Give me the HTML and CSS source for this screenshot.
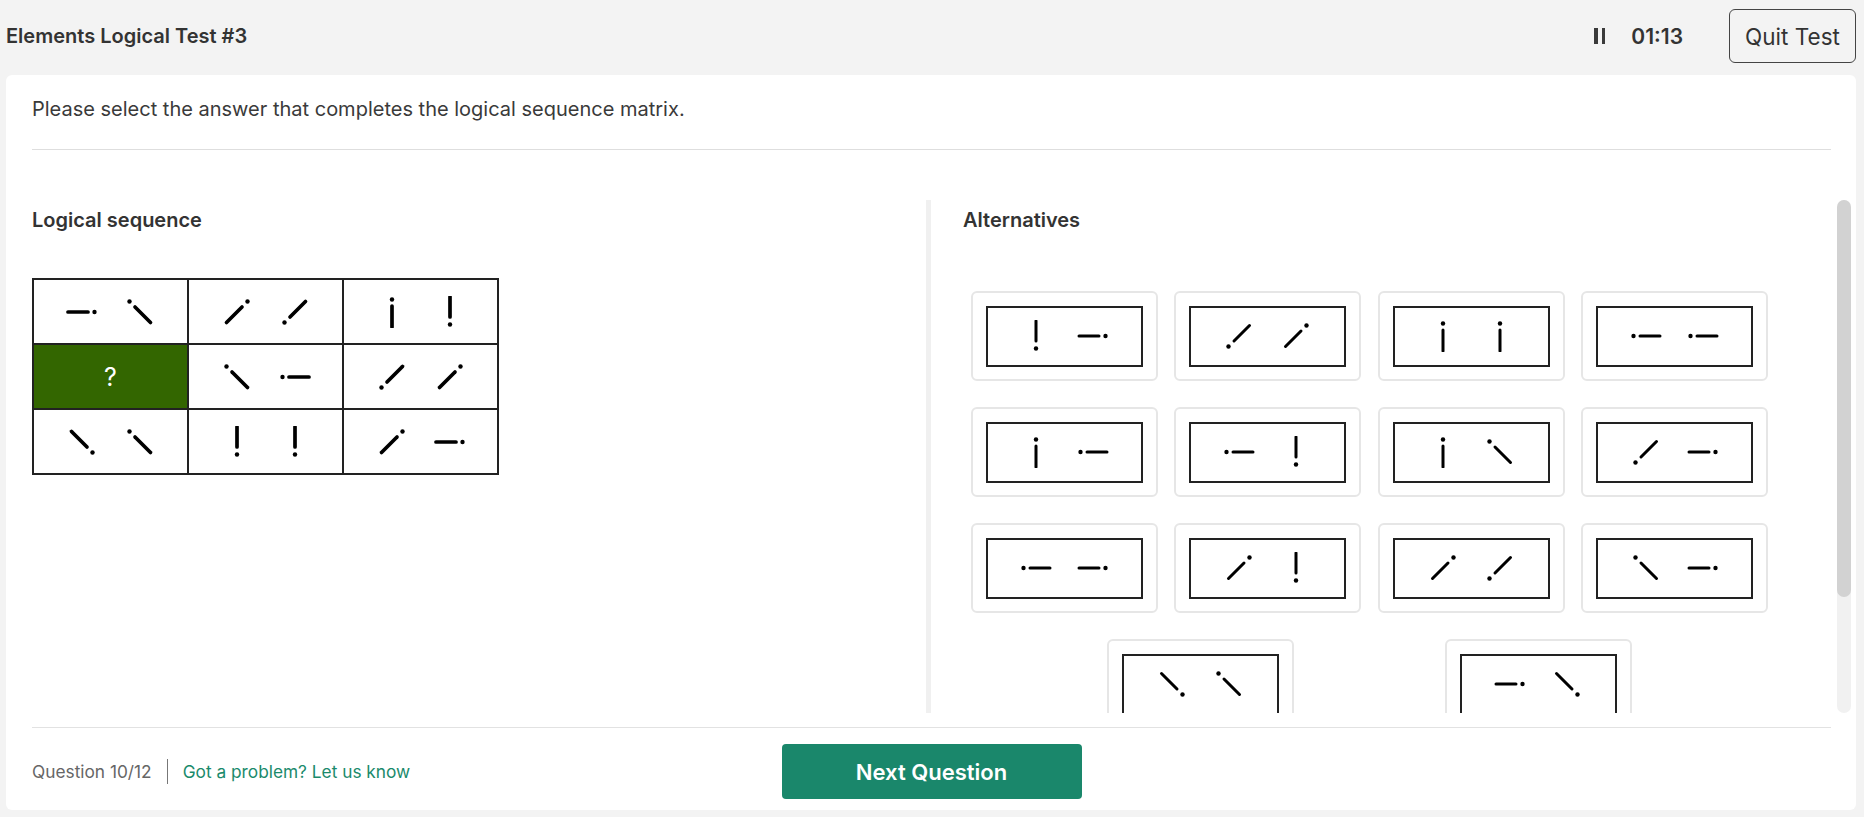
FILE: index.html
```html
<!DOCTYPE html>
<html lang="en">
<head>
<meta charset="utf-8">
<title>Elements Logical Test #3</title>
<link rel="stylesheet" href="styles.css">
</head>
<body>
<svg class="defs" width="0" height="0" aria-hidden="true">
  <defs>
    <symbol id="hr" viewBox="0 0 32 32"><line x1="2" y1="16" x2="22" y2="16"/><circle cx="28.5" cy="16" r="2.2" stroke="none"/></symbol>
    <symbol id="hl" viewBox="0 0 32 32"><circle cx="3.5" cy="16" r="2.2" stroke="none"/><line x1="10" y1="16" x2="30" y2="16"/></symbol>
    <symbol id="vb" viewBox="0 0 32 32"><line x1="16" y1="1" x2="16" y2="21"/><circle cx="16" cy="28.5" r="2.2" stroke="none"/></symbol>
    <symbol id="vt" viewBox="0 0 32 32"><circle cx="16" cy="3.5" r="2.2" stroke="none"/><line x1="16" y1="10" x2="16" y2="31"/></symbol>
    <symbol id="btl" viewBox="0 0 32 32"><circle cx="5.5" cy="5.5" r="2.2" stroke="none"/><line x1="11" y1="11" x2="26.5" y2="26.5"/></symbol>
    <symbol id="bbr" viewBox="0 0 32 32"><line x1="5.5" y1="5.5" x2="21" y2="21"/><circle cx="26.5" cy="26.5" r="2.2" stroke="none"/></symbol>
    <symbol id="ftr" viewBox="0 0 32 32"><line x1="5.5" y1="26.5" x2="21" y2="11"/><circle cx="26.5" cy="5.5" r="2.2" stroke="none"/></symbol>
    <symbol id="fbl" viewBox="0 0 32 32"><circle cx="5.5" cy="26.5" r="2.2" stroke="none"/><line x1="11" y1="21" x2="26.5" y2="5.5"/></symbol>
  </defs>
</svg>

<header class="header">
  <div class="title">Elements Logical Test #3</div>
  <div class="timer">
    <div class="pause"><span></span><span></span></div>
    <div class="time">01:13</div>
  </div>
  <button class="quit">Quit Test</button>
</header>

<main class="card">
  <div class="prompt">Please select the answer that completes the logical sequence matrix.</div>

  <div class="main">
    <section class="seq">
      <div class="h">Logical sequence</div>
      <div class="matrix">
        <div class="cell"><svg class="sym"><use href="#hr"/></svg><svg class="sym"><use href="#btl"/></svg></div>
        <div class="cell"><svg class="sym"><use href="#ftr"/></svg><svg class="sym"><use href="#fbl"/></svg></div>
        <div class="cell"><svg class="sym"><use href="#vt"/></svg><svg class="sym"><use href="#vb"/></svg></div>
        <div class="cell q">?</div>
        <div class="cell"><svg class="sym"><use href="#btl"/></svg><svg class="sym"><use href="#hl"/></svg></div>
        <div class="cell"><svg class="sym"><use href="#fbl"/></svg><svg class="sym"><use href="#ftr"/></svg></div>
        <div class="cell"><svg class="sym"><use href="#bbr"/></svg><svg class="sym"><use href="#btl"/></svg></div>
        <div class="cell"><svg class="sym"><use href="#vb"/></svg><svg class="sym"><use href="#vb"/></svg></div>
        <div class="cell"><svg class="sym"><use href="#ftr"/></svg><svg class="sym"><use href="#hr"/></svg></div>
      </div>
    </section>

    <section class="alts">
      <div class="alts-scroll">
        <div class="h">Alternatives</div>
        <div class="grid">
          <div class="opt"><div class="img"><svg class="sym"><use href="#vb"/></svg><svg class="sym"><use href="#hr"/></svg></div></div>
          <div class="opt"><div class="img"><svg class="sym"><use href="#fbl"/></svg><svg class="sym"><use href="#ftr"/></svg></div></div>
          <div class="opt"><div class="img"><svg class="sym"><use href="#vt"/></svg><svg class="sym"><use href="#vt"/></svg></div></div>
          <div class="opt"><div class="img"><svg class="sym"><use href="#hl"/></svg><svg class="sym"><use href="#hl"/></svg></div></div>

          <div class="opt"><div class="img"><svg class="sym"><use href="#vt"/></svg><svg class="sym"><use href="#hl"/></svg></div></div>
          <div class="opt"><div class="img"><svg class="sym"><use href="#hl"/></svg><svg class="sym"><use href="#vb"/></svg></div></div>
          <div class="opt"><div class="img"><svg class="sym"><use href="#vt"/></svg><svg class="sym"><use href="#btl"/></svg></div></div>
          <div class="opt"><div class="img"><svg class="sym"><use href="#fbl"/></svg><svg class="sym"><use href="#hr"/></svg></div></div>

          <div class="opt"><div class="img"><svg class="sym"><use href="#hl"/></svg><svg class="sym"><use href="#hr"/></svg></div></div>
          <div class="opt"><div class="img"><svg class="sym"><use href="#ftr"/></svg><svg class="sym"><use href="#vb"/></svg></div></div>
          <div class="opt"><div class="img"><svg class="sym"><use href="#ftr"/></svg><svg class="sym"><use href="#fbl"/></svg></div></div>
          <div class="opt"><div class="img"><svg class="sym"><use href="#btl"/></svg><svg class="sym"><use href="#hr"/></svg></div></div>

          <div class="opt"><div class="img"><svg class="sym"><use href="#bbr"/></svg><svg class="sym"><use href="#btl"/></svg></div></div>
          <div class="opt"><div class="img"><svg class="sym"><use href="#hr"/></svg><svg class="sym"><use href="#bbr"/></svg></div></div>
        </div>
      </div>
      <div class="scrollbar"><div class="thumb"></div></div>
    </section>
  </div>

  <footer class="footer">
    <div class="meta">
      <span class="qnum">Question 10/12</span>
      <span class="sep"></span>
      <a class="link" href="#">Got a problem? Let us know</a>
    </div>
    <button class="next">Next Question</button>
    <div></div>
  </footer>
</main>
</body>
</html>
```

FILE: styles.css
```css
* { box-sizing: border-box; }

html, body { height: 817px; }

body {
  margin: 0;
  background: #f3f3f3;
  font-family: Inter, "Noto Sans", sans-serif;
  color: #333;
  overflow: hidden;
}

.defs { position: absolute; width: 0; height: 0; overflow: hidden; }

/* header */
.header {
  height: 72px;
  display: flex;
  align-items: center;
  padding: 0 8px 0 6px;
}
.title { flex: 1; font-size: 20px; font-weight: 600; color: #333; }
.timer { display: flex; align-items: center; gap: 26px; margin-right: 46px; }
.pause { display: flex; gap: 4px; }
.pause span { width: 3.5px; height: 16px; background: #3a3a3a; }
.time { font-size: 21px; font-weight: 600; color: #333; }
.quit {
  width: 127px;
  height: 54px;
  border: 1px solid #444;
  border-radius: 6px;
  background: transparent;
  font-family: Inter, "Noto Sans", sans-serif;
  font-size: 22.5px;
  color: #333;
  padding: 0;
}

/* card */
.card {
  margin: 3px 8px 0 6px;
  height: 735px;
  background: #fff;
  border-radius: 6px;
  padding: 0 25px 0 26px;
  display: flex;
  flex-direction: column;
}
.prompt {
  padding: 20px 0 26px;
  font-size: 20px;
  line-height: 28px;
  color: #3a3a3a;
  border-bottom: 1px solid #dedede;
}

.main {
  display: flex;
  height: 577px;
  padding: 50px 0 14px;
  margin-right: -20px;
}
.seq { width: 894px; padding-top: 8px; }
.h { font-size: 20px; font-weight: 600; line-height: 24px; color: #333; }

.matrix {
  margin-top: 46px;
  display: grid;
  grid-template-columns: repeat(3, 153px);
  grid-auto-rows: 63px;
  gap: 2px;
  padding: 2px;
  background: #222;
  width: max-content;
}
.cell {
  background: #fff;
  display: flex;
  align-items: center;
  justify-content: center;
  gap: 26px;
}
.cell.q { background: #336600; color: #fff; font-size: 25px; }

.sym {
  width: 32px;
  height: 32px;
  stroke: #000;
  fill: #000;
  stroke-width: 3.7;
  stroke-linecap: round;
}

/* alternatives */
.alts {
  flex: 1;
  display: flex;
  border-left: 5px solid #f0f0f0;
}
.alts-scroll {
  flex: 1;
  overflow: hidden;
  padding: 8px 53px 0 24px;
}
.alts .h { padding-left: 8px; }
.scrollbar {
  width: 14px;
  background: #f1f1f1;
  border-radius: 7px;
  display: flex;
  flex-direction: column;
}
.thumb { height: 397px; background: #d2d2d2; border-radius: 7px; }

.grid {
  margin-top: 59px;
  display: flex;
  flex-wrap: wrap;
  justify-content: space-evenly;
  row-gap: 26px;
}
.opt {
  width: 187px;
  height: 90px;
  border: 2px solid #e6e6e6;
  border-radius: 6px;
  display: flex;
  align-items: center;
  justify-content: center;
}
.img {
  width: 157px;
  height: 61px;
  border: 2px solid #222;
  display: flex;
  align-items: center;
  justify-content: center;
  gap: 25px;
}
.img .sym { stroke-width: 3; }

/* footer */
.footer {
  border-top: 1px solid #e2e2e2;
  display: grid;
  grid-template-columns: 1fr auto 1fr;
  align-items: center;
  padding: 16px 0 11px;
}
.meta { display: flex; align-items: center; font-size: 17.3px; }
.qnum { color: #666; }
.sep { width: 1px; height: 25px; background: #777; margin: 0 15px; }
.link { color: #1a8a6b; text-decoration: none; }
.next {
  width: 300px;
  height: 55px;
  background: #1a876b;
  color: #fff;
  border: 0;
  border-radius: 4px;
  font-family: Inter, "Noto Sans", sans-serif;
  font-size: 22px;
  font-weight: 600;
}
```
